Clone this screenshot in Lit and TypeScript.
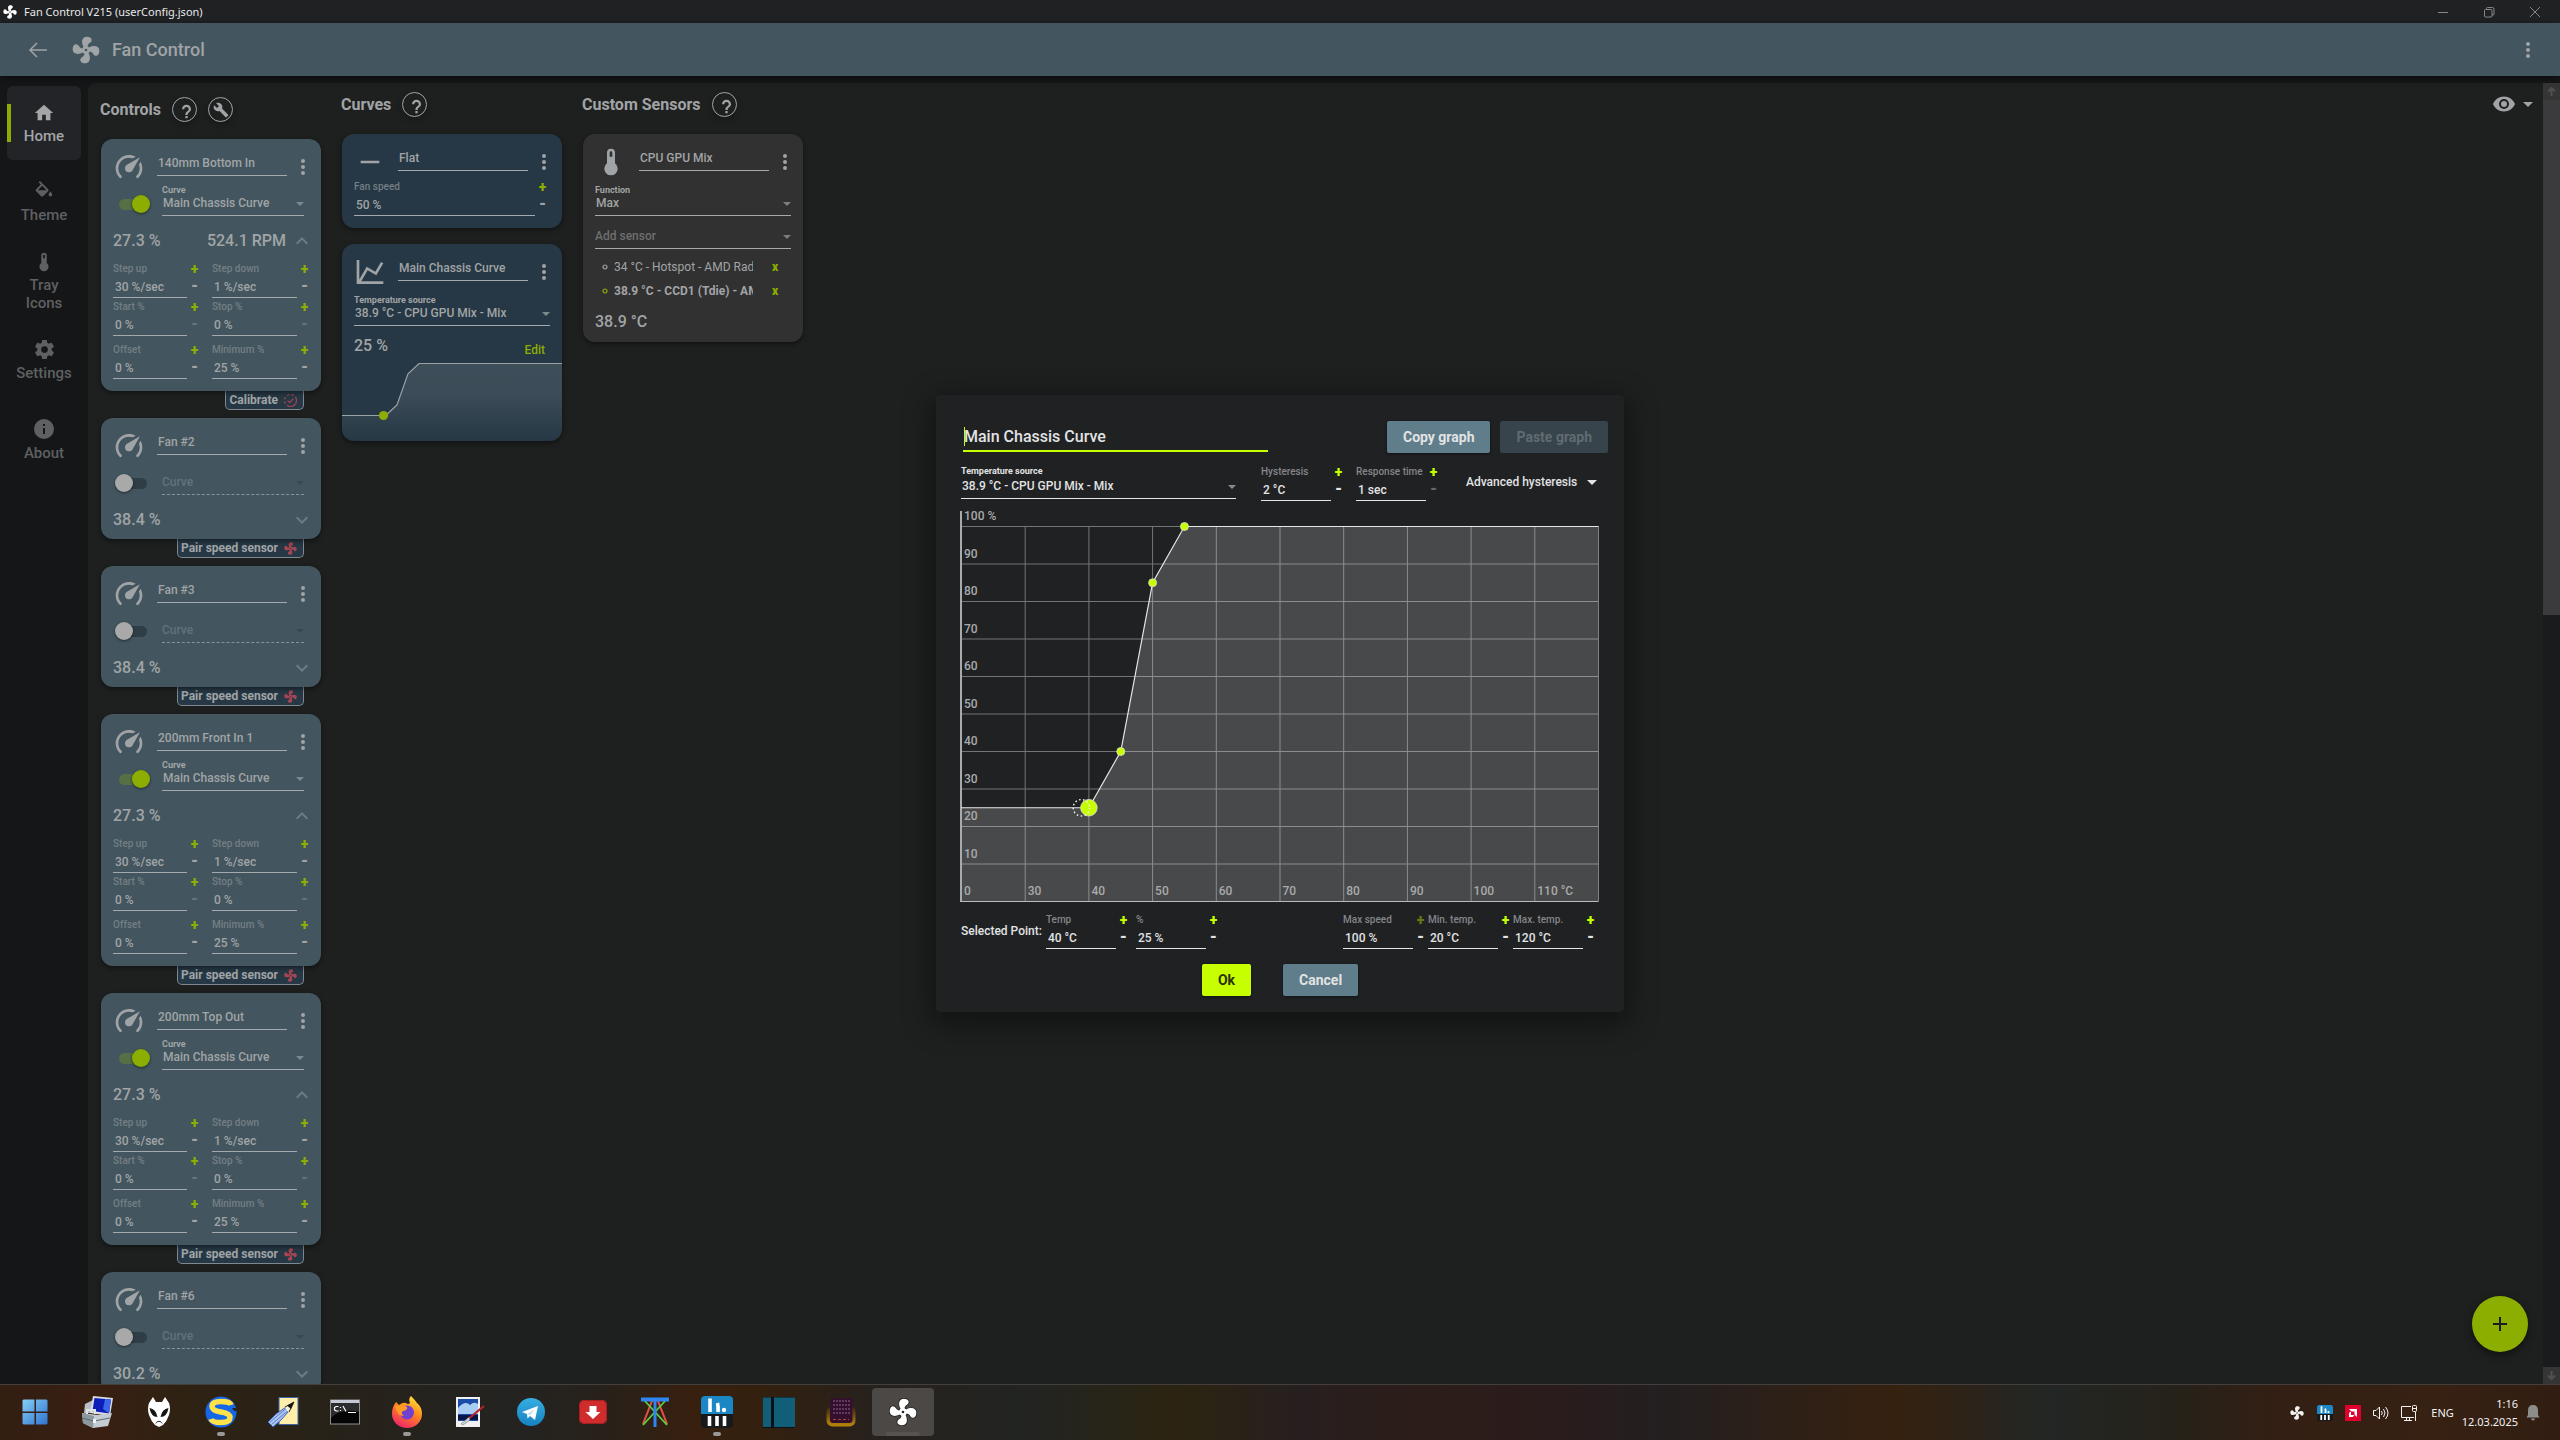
import { LitElement, html, css, svg, nothing } from "lit";
import { customElement } from "lit/decorators.js";
import { classMap } from "lit/directives/class-map.js";

const ICONS = {
  fan: "M12,11A1,1 0 0,0 11,12A1,1 0 0,0 12,13A1,1 0 0,0 13,12A1,1 0 0,0 12,11M12.5,2C17,2 17.11,5.57 14.75,6.75C13.76,7.24 13.32,8.29 13.13,9.22C13.61,9.42 14.03,9.73 14.35,10.13C18.05,8.13 22.03,8.92 22.03,12.5C22.03,17 18.46,17.1 17.28,14.73C16.78,13.74 15.72,13.3 14.79,13.11C14.59,13.59 14.28,14 13.88,14.34C15.87,18.03 15.08,22 11.5,22C7,22 6.91,18.42 9.27,17.24C10.25,16.75 10.69,15.71 10.89,14.79C10.4,14.59 9.97,14.27 9.65,13.87C5.96,15.85 2,15.07 2,11.5C2,7 5.56,6.89 6.74,9.26C7.24,10.25 8.29,10.68 9.22,10.87C9.41,10.39 9.73,9.97 10.14,9.65C8.15,5.96 8.94,2 12.5,2Z",
  home: "M10,20V14H14V20H19V12H22L12,3L2,12H5V20H10Z",
  fill: "M19,11.5C19,11.5 17,13.67 17,15A2,2 0 0,0 19,17A2,2 0 0,0 21,15C21,13.67 19,11.5 19,11.5M5.21,10L10,5.21L14.79,10M16.56,8.94L7.62,0L6.21,1.41L8.59,3.79L3.44,8.94C2.85,9.5 2.85,10.47 3.44,11.06L8.94,16.56C9.23,16.85 9.62,17 10,17C10.38,17 10.77,16.85 11.06,16.56L16.56,11.06C17.15,10.47 17.15,9.5 16.56,8.94Z",
  thermo: "M15 13V5A3 3 0 0 0 9 5V13A5 5 0 1 0 15 13M12 4A1 1 0 0 1 13 5V8H11V5A1 1 0 0 1 12 4Z",
  cog: "M12,15.5A3.5,3.5 0 0,1 8.5,12A3.5,3.5 0 0,1 12,8.5A3.5,3.5 0 0,1 15.5,12A3.5,3.5 0 0,1 12,15.5M19.43,12.97C19.47,12.65 19.5,12.33 19.5,12C19.5,11.67 19.47,11.34 19.43,11L21.54,9.37C21.73,9.22 21.78,8.95 21.66,8.73L19.66,5.27C19.54,5.05 19.27,4.96 19.05,5.05L16.56,6.05C16.04,5.66 15.5,5.32 14.87,5.07L14.5,2.42C14.46,2.18 14.25,2 14,2H10C9.75,2 9.54,2.18 9.5,2.42L9.13,5.07C8.5,5.32 7.96,5.66 7.44,6.05L4.95,5.05C4.73,4.96 4.46,5.05 4.34,5.27L2.34,8.73C2.21,8.95 2.27,9.22 2.46,9.37L4.57,11C4.53,11.34 4.5,11.67 4.5,12C4.5,12.33 4.53,12.65 4.57,12.97L2.46,14.63C2.27,14.78 2.21,15.05 2.34,15.27L4.34,18.73C4.46,18.95 4.73,19.03 4.95,18.95L7.44,17.94C7.96,18.34 8.5,18.68 9.13,18.93L9.5,21.58C9.54,21.82 9.75,22 10,22H14C14.25,22 14.46,21.82 14.5,21.58L14.87,18.93C15.5,18.67 16.04,18.34 16.56,17.94L19.05,18.95C19.27,19.03 19.54,18.95 19.66,18.73L21.66,15.27C21.78,15.05 21.73,14.78 21.54,14.63L19.43,12.97Z",
  info: "M13,9H11V7H13M13,17H11V11H13M12,2A10,10 0 0,0 2,12A10,10 0 0,0 12,22A10,10 0 0,0 22,12A10,10 0 0,0 12,2Z",
  eye: "M12,9A3,3 0 0,0 9,12A3,3 0 0,0 12,15A3,3 0 0,0 15,12A3,3 0 0,0 12,9M12,17A5,5 0 0,1 7,12A5,5 0 0,1 12,7A5,5 0 0,1 17,12A5,5 0 0,1 12,17M12,4.5C7,4.5 2.73,7.61 1,12C2.73,16.39 7,19.5 12,19.5C17,19.5 21.27,16.39 23,12C21.27,7.61 17,4.5 12,4.5Z",
  wrench: "M22.7,19L13.6,9.9C14.5,7.6 14,4.9 12.1,3C10.1,1 7.1,0.6 4.7,1.7L9,6L6,9L1.6,4.7C0.4,7.1 0.9,10.1 2.9,12.1C4.8,14 7.5,14.5 9.8,13.6L18.9,22.7C19.3,23.1 19.9,23.1 20.3,22.7L22.6,20.4C23.1,20 23.1,19.3 22.7,19Z",
  help: "M11,18H13V16H11V18M12,6A4,4 0 0,0 8,10H10A2,2 0 0,1 12,8A2,2 0 0,1 14,10C14,12 11,11.75 11,15H13C13,12.75 16,12.5 16,10A4,4 0 0,0 12,6Z",
  gauge: "M12,16A3,3 0 0,1 9,13C9,11.88 9.61,10.9 10.5,10.39L20.21,4.77L14.68,14.35C14.18,15.33 13.17,16 12,16M12,3C13.81,3 15.5,3.5 16.97,4.32L14.87,5.53C14,5.19 13,5 12,5A8,8 0 0,0 4,13C4,15.21 4.89,17.21 6.34,18.65H6.35C6.74,19.04 6.74,19.67 6.35,20.06C5.96,20.45 5.32,20.45 4.93,20.07V20.07C3.12,18.26 2,15.76 2,13A10,10 0 0,1 12,3M22,13C22,15.76 20.88,18.26 19.07,20.07V20.07C18.68,20.45 18.05,20.45 17.66,20.06C17.27,19.67 17.27,19.04 17.66,18.65V18.65C19.11,17.2 20,15.21 20,13C20,12 19.81,11 19.46,10.1L20.67,8C21.5,9.5 22,11.18 22,13Z",
  line: "M16,11.78L20.24,4.45L21.97,5.45L16.74,14.5L10.23,10.75L5.46,19H22V21H2V3H4V17.54L9.5,8L16,11.78Z",
  minus: "M19,13H5V11H19V13Z",
  down: "M7.41,8.58L12,13.17L16.59,8.58L18,10L12,16L6,10L7.41,8.58Z",
  up: "M7.41,15.41L12,10.83L16.59,15.41L18,14L12,8L6,14L7.41,15.41Z",
  dots: "M12,16A2,2 0 0,1 14,18A2,2 0 0,1 12,20A2,2 0 0,1 10,18A2,2 0 0,1 12,16M12,10A2,2 0 0,1 14,12A2,2 0 0,1 12,14A2,2 0 0,1 10,12A2,2 0 0,1 12,10M12,4A2,2 0 0,1 14,6A2,2 0 0,1 12,8A2,2 0 0,1 10,6A2,2 0 0,1 12,4Z",
  caret: "M7,10L12,15L17,10H7Z",
};

const icon = (name: keyof typeof ICONS, size: number, cls = "") =>
  html`<svg class=${"icon " + cls} width=${size} height=${size} viewBox="0 0 24 24" aria-hidden="true"><path d=${ICONS[name]} /></svg>`;

const base = css`
  * { box-sizing: border-box; }
  button, input, select { font: inherit; color: inherit; background: none; border: 0; padding: 0; margin: 0; border-radius: 0; outline: none; }
  button { cursor: pointer; }
  svg { display: block; flex: none; }
  .icon { fill: currentColor; }
`;

type Num = { label: string; value: string; minusOff?: boolean; plusOff?: boolean };
type Fan = { name: string; pct: string; curve?: string; rpm?: string; tab: "calibrate" | "pair" };

const fans: Fan[] = [
  { name: "140mm Bottom In", pct: "27.3 %", curve: "Main Chassis Curve", rpm: "524.1 RPM", tab: "calibrate" },
  { name: "Fan #2", pct: "38.4 %", tab: "pair" },
  { name: "Fan #3", pct: "38.4 %", tab: "pair" },
  { name: "200mm Front In 1", pct: "27.3 %", curve: "Main Chassis Curve", tab: "pair" },
  { name: "200mm Top Out", pct: "27.3 %", curve: "Main Chassis Curve", tab: "pair" },
  { name: "Fan #6", pct: "30.2 %", tab: "pair" },
];

const fanSettings: Num[] = [
  { label: "Step up", value: "30 %/sec" },
  { label: "Step down", value: "1 %/sec" },
  { label: "Start %", value: "0 %", minusOff: true },
  { label: "Stop %", value: "0 %", minusOff: true },
  { label: "Offset", value: "0 %" },
  { label: "Minimum %", value: "25 %" },
];

const curve: [number, number][] = [[40, 25], [45, 40], [50, 85], [55, 100]];

let uid = 0;

@customElement("app-root")
export class AppRoot extends LitElement {
  static styles = [base, css`
    :host {
      display: grid; grid-template-rows: minmax(0, 1fr) auto; height: 100vh; overflow: hidden;
      font-family: Roboto, sans-serif; font-weight: 500; font-size: 12px; line-height: 15px;
      --ink: #a1a4a6; --dim: #747e84; --lime: #8bae00; --rule: #a3a9ac; --caret: #7e898f;
      background: #151618; color: var(--ink);
    }
    .window { display: grid; grid-template-rows: 23px minmax(0, 1fr); min-height: 0; }
    .titlebar { display: flex; align-items: center; padding: 0 19px 0 2px; gap: 6px; background: #202123; color: #e8e8e8; font: 400 11px/16px "Noto Sans", sans-serif; }
    .titlebar .fanicon { color: #fff; }
    .winbtns { margin-left: auto; display: flex; gap: 34px; color: #85878a; }
    .winbtns svg { fill: none; stroke: currentColor; }
    .app { position: relative; display: grid; grid-template-rows: 53px minmax(0, 1fr); min-height: 0; }
    .header { display: flex; align-items: center; padding: 0 20px 0 26px; background: #43565f; z-index: 1; box-shadow: 0 2px 6px rgba(0,0,0,.5); color: #a1a4a6; }
    .back svg { fill: none; stroke: currentColor; stroke-width: 2; }
    .header .logo { margin-left: 20px; }
    .header h1 { margin: 0 auto 0 10px; font-size: 18px; line-height: 24px; font-weight: 500; }
    .body { display: grid; grid-template-columns: 88px minmax(0, 1fr) 17px; min-height: 0; }
    .nav { display: flex; flex-direction: column; gap: 5px; padding: 10px 7px; color: #5f6062; font-size: 15px; line-height: 18px; }
    .nav button { display: flex; flex-direction: column; align-items: center; justify-content: center; gap: 3px; min-height: 74px; border-radius: 6px; padding: 0 10px; }
    .nav .on { background: linear-gradient(var(--lime), var(--lime)) 0 18px / 4px 38px no-repeat, #232427; color: #a4a6a7; }
    .panel { display: flex; align-items: flex-start; gap: 21px; min-width: 0; min-height: 0; overflow: hidden; margin-top: 7px; padding-left: 13px; background: #1e201f; border-top-left-radius: 8px; }
    .column { width: 220px; flex: none; padding-top: 9px; }
    .column.controls { padding-top: 14px; }
    .colhead { display: flex; align-items: center; gap: 11px; margin: 0 0 17px -1px; }
    .colhead h2 { margin: 0; font-size: 16px; line-height: 25px; font-weight: 700; white-space: nowrap; }
    .round { width: 25px; height: 25px; border: 1px solid currentColor; border-radius: 50%; display: grid; place-items: center; box-shadow: 0 3px 6px rgba(0,0,0,.25); }
    .view { margin: 9px 3px 0 auto; display: flex; align-items: center; }
    .scroll { margin-top: 7px; display: grid; grid-template-rows: 17px 515px minmax(0, 1fr) 17px; background: #1a1b1c; }
    .scroll .thumb { background: #3b3b3d; }
    .scroll button { background: #353536; display: grid; place-items: center; color: #505052; }
    .scroll svg { fill: none; stroke: currentColor; stroke-width: 2; }

    .card { border-radius: 12px; background: #43565f; box-shadow: 0 2px 5px rgba(0,0,0,.45); position: relative; overflow: hidden; padding-bottom: 9px; }
    .card.open { padding-bottom: 12px; }
    .card.blue { background: #263845; padding-bottom: 10px; }
    .card.grey { background: #313131; --dim: #6d6e6e; --caret: #7d7d7d; padding-bottom: 10px; }
    .card.graph { padding-bottom: 0; }
    .stack { display: flex; flex-direction: column; gap: 16px; }
    .cardhead { display: flex; padding: 11px 6px 0 12px; height: 43px; }
    .cardhead .icon { margin-top: 1px; }
    .cardhead .name { width: 130px; height: 26px; margin: 0 4px 0 12px; padding-left: 1px; border-bottom: 1px solid var(--rule); }
    .cardhead button { height: 33px; }
    .switchrow { display: flex; gap: 12px; margin: 3px 17px 0 14px; }
    .toggle { appearance: none; flex: none; width: 35px; height: 18px; margin-top: 10px; display: grid; align-items: center; grid-template-columns: 100%; }
    .toggle::before { content: ""; grid-area: 1 / 1; height: 11px; margin: 0 3px 0 4px; border-radius: 6px; background: #2f3e46; }
    .toggle::after { content: ""; grid-area: 1 / 1; width: 18px; height: 18px; border-radius: 50%; background: #a9a9a9; box-shadow: 0 1px 3px rgba(0,0,0,.5); }
    .toggle:checked::before { background: #566f45; }
    .toggle:checked::after { background: var(--lime); justify-self: end; }
    .pick { display: flex; flex-direction: column; flex: 1; min-width: 0; }
    .pick label { font-size: 9px; line-height: 11px; height: 11px; font-weight: 700; }
    .pickbox { display: grid; align-items: center; }
    .pickbox select { grid-area: 1 / 1; appearance: none; width: 100%; height: 20px; padding: 0 16px 5px 1px; border-bottom: 1px solid var(--rule); line-height: 14px; }
    .pickbox svg { grid-area: 1 / 1; justify-self: end; margin: 0 0 5px 0; pointer-events: none; color: var(--caret); }
    .off select { border-bottom-style: dashed; color: #62727a; padding-left: 0; opacity: 1; border-bottom-color: #87949a; }
    .off svg { color: #394850; }
    .dimmed select { color: var(--dim); padding-left: 0; }
    .reading { display: flex; align-items: center; justify-content: space-between; height: 20px; margin: 15px 7px 0 12px; font-size: 16px; line-height: 20px; }
    .reading .rpm { margin-left: auto; margin-right: 4px; }
    .reading button { color: #6d7b82; }
    .settings { display: grid; grid-template-columns: 89fr 100fr; column-gap: 10px; row-gap: 2px; margin: 11px 9px 0 12px; }
    .settings .num:nth-child(n + 5) { margin-top: 5px; }
    .num { display: grid; grid-template-columns: minmax(0, 1fr) 15px; grid-template-rows: 14px 22px; }
    .num label { font-size: 10px; line-height: 14px; color: var(--dim); white-space: nowrap; }
    .num input { width: 100%; height: 22px; padding: 1px 0 0 2px; border-bottom: 1px solid var(--rule); }
    .num button { font-weight: 900; font-size: 14px; line-height: 14px; text-align: center; color: var(--lime); }
    .num .less { color: var(--ink); font-size: 16px; line-height: 20px; height: 20px; }
    .num .less:disabled { color: var(--dim); opacity: .7; }
    .num .more:disabled { opacity: .4; }
    .tabrow { display: flex; justify-content: flex-end; height: 19px; margin: 0 17px 8px 0; }
    .tab { display: flex; align-items: center; gap: 5px; padding: 1px 5px 0 3px; border: 1px solid #7f888e; border-top: 0; border-radius: 0 0 5px 5px; background: #263845; font-weight: 700; line-height: 17px; }
    .tab svg { color: #a34552; }
    .inset { margin: 8px 12px 0 12px; }
    .inset.second { margin-top: 13px; }
    .flat { margin: 3px 12px 2px 12px; }
    .graph .reading { margin-top: 10px; }
    .reading button.edit { color: var(--lime); align-self: flex-start; font-size: 12px; line-height: 28px; margin-right: 10px; }
    .mini { display: block; width: 100%; height: 84px; margin-top: 1px; }
    .sensors { list-style: none; margin: 6px 12px 8px 19px; padding: 0; }
    .sensors li { display: flex; align-items: center; height: 24px; font-weight: 500; }
    .sensors .dot { fill: none; stroke: var(--ink); }
    .sensors .txt { width: 139px; margin: 0 19px 0 6px; overflow: hidden; white-space: nowrap; font-weight: 400; }
    .sensors .hot .txt { font-weight: 700; }
    .sensors .hot .dot { stroke: var(--lime); }
    .sensors button { color: var(--lime); font-weight: 900; }
    .grey .reading { margin-top: 9px; }
    .fab { position: absolute; right: 32px; bottom: 32px; width: 56px; height: 56px; border-radius: 50%; background: var(--lime); color: #1c1e1d; display: grid; place-items: center; box-shadow: 0 3px 8px rgba(0,0,0,.5); }

    .overlay { position: absolute; inset: 0; z-index: 2; display: grid; place-items: center; }
    .dialog { width: 688px; max-width: 96vw; padding: 26px 25px 16px; border-radius: 4px; background: #202123; box-shadow: 0 8px 28px 6px rgba(0,0,0,.4); color: #e2e3e3; --ink: #e2e3e3; --dim: #85868a; --lime: #c6ff00; --rule: #e6e6e6; --caret: #8b8b8d; }
    .top { display: flex; gap: 10px; margin: 0 -9px 12px 2px; height: 32px; }
    .title { position: relative; width: 305px; height: 31px; margin-right: auto; }
    .title input { width: 100%; height: 31px; padding: 2px 0 0 1px; border-bottom: 2px solid var(--lime); font-size: 16px; }
    .title .cursor { position: absolute; left: 1px; top: 6px; width: 1px; height: 19px; background: var(--lime); }
    .btn { height: 32px; padding: 0 16px; border-radius: 2px; background: #607d8b; font-weight: 700; font-size: 14px; box-shadow: 0 1px 3px rgba(0,0,0,.5); white-space: nowrap; }
    .btn:disabled { background: #37444b; color: #616b70; box-shadow: none; }
    .btn.primary { background: var(--lime); color: #2b3100; }
    .opts { display: flex; align-items: flex-start; }
    .opts .pick { flex: 0 1 275px; gap: 2px; margin-right: 25px; }
    .opts .pick label { line-height: 12px; height: 12px; }
    .w { width: 85px; flex: none; }
    .opts .w { margin-right: 10px; }
    .adv { display: flex; align-items: center; gap: 10px; height: 34px; margin-left: 15px; white-space: nowrap; }
    .chart { display: block; width: calc(100% + 2px); margin: 10px 0 11px -1px; overflow: visible; }
    .chart text { fill: #a9aaab; font: 500 12px Roboto, sans-serif; }
    .bottom { display: flex; margin-right: 1px; }
    .bottom .sel { align-self: center; margin-right: 4px; line-height: 20px; white-space: nowrap; }
    .bottom .w + .w { margin-left: 5px; }
    .bottom .limits { display: flex; margin-left: auto; }
    .bottom .limits .w { margin-left: 0; }
    .actions { display: flex; justify-content: center; gap: 32px; margin-top: 15px; }
  `];

  private num(n: Num, cls = "") {
    const id = `n${uid++}`;
    return html`<div class=${"num " + cls}>
      <label for=${id}>${n.label}</label>
      <button class="more" aria-label=${"Increase " + n.label} ?disabled=${!!n.plusOff}>+</button>
      <input id=${id} type="text" .value=${n.value} />
      <button class="less" aria-label=${"Decrease " + n.label} ?disabled=${!!n.minusOff}>-</button>
    </div>`;
  }

  private pick(label: string, value: string, cls = "", showLabel = true) {
    const id = `s${uid++}`;
    const off = cls.includes("off");
    return html`<div class=${"pick " + cls}>
      ${showLabel || off ? html`<label for=${id}>${off ? nothing : label}</label>` : nothing}
      <div class="pickbox">
        <select id=${id} aria-label=${label} ?disabled=${off}><option>${value}</option></select>
        <svg class="icon" width="8" height="4" viewBox="0 0 8 4"><path d="M0 0H8L4 4Z" /></svg>
      </div>
    </div>`;
  }

  private head(ic: keyof typeof ICONS, name: string) {
    return html`<div class="cardhead">
      ${icon(ic, 32)}
      <input class="name" type="text" aria-label="Name" .value=${name} />
      <button aria-label="More">${icon("dots", 24)}</button>
    </div>`;
  }

  private fan(f: Fan) {
    const open = !!f.curve;
    return html`
      <article class=${classMap({ card: true, open })}>
        ${this.head("gauge", f.name)}
        <div class="switchrow">
          <input class="toggle" type="checkbox" aria-label=${"Enable " + f.name} .checked=${open} />
          ${open ? this.pick("Curve", f.curve!) : this.pick("Curve", "Curve", "off")}
        </div>
        <div class="reading">
          <span>${f.pct}</span>
          ${f.rpm ? html`<span class="rpm">${f.rpm}</span>` : nothing}
          <button aria-label="Expand">${icon(open ? "up" : "down", 24)}</button>
        </div>
        ${open ? html`<div class="settings">${fanSettings.map((s) => this.num(s))}</div>` : nothing}
      </article>
      <div class="tabrow">
        ${f.tab === "calibrate"
          ? html`<button class="tab">Calibrate
              <svg width="15" height="15" viewBox="0 0 15 15" fill="none" stroke="currentColor" stroke-width="1.2"><circle cx="7.5" cy="7.5" r="6" stroke-dasharray="13 2 2.5 2 2.5 2 2.5 2 2.5 2" /><path d="M4.6 7.6L6.7 9.6L10.4 5.6" /></svg></button>`
          : html`<button class="tab">Pair speed sensor ${icon("fan", 15)}</button>`}
      </div>`;
  }

  private miniGraph() {
    const pts = curve.map(([t, p]) => `${((t - 20) * 2.2).toFixed(1)},${(75.5 - p * 0.69).toFixed(1)}`).join(" ");
    return html`<svg class="mini" viewBox="0 0 220 84" preserveAspectRatio="none">
      <defs><linearGradient id="g" x1="0" y1="0" x2="0" y2="1"><stop offset="0" stop-color="#fff" stop-opacity=".11" /><stop offset=".4" stop-color="#fff" stop-opacity=".1" /><stop offset="1" stop-color="#fff" stop-opacity="0" /></linearGradient></defs>
      <polygon fill="url(#g)" points="0,58.5 ${pts} 220,6.5 220,84 0,84" />
      <polyline fill="none" stroke="#9aa3a8" stroke-width="1.2" points="0,58.5 ${pts} 220,6.5" />
      <circle cx="41.5" cy="58.5" r="4.6" fill="#8bae00" />
    </svg>`;
  }

  private chart() {
    const X = (t: number) => 1.5 + (t - 20) * 6.37;
    const Y = (p: number) => 390.5 - p * 3.75;
    const pts = curve.map(([t, p]) => `${X(t)},${Y(p)}`).join(" ");
    const idx = Array.from({ length: 10 }, (_, i) => i);
    return html`<svg class="chart" viewBox="0 0 640 391" role="img" aria-label="Fan curve">
      ${idx.map((i) => svg`
        <line x1="1" x2="638.5" y1=${Y(100 - i * 10)} y2=${Y(100 - i * 10)} stroke="#747576" />
        <line y1="15" y2="390" x1=${X(30 + i * 10)} x2=${X(30 + i * 10)} stroke="#747576" />`)}
      <polygon fill="#fff" fill-opacity=".18" points="1,${Y(25)} ${pts} ${X(120)},${Y(100)} ${X(120)},${Y(0)} 1,${Y(0)}" />
      <path d="M1 0V390.500" stroke="#a9aaab" stroke-width="2" />
      <path d="M0 390.5H638.5" stroke="#b9baba" />
      ${idx.map((i) => svg`
        <text x="4" y=${9 + i * 37.5}>${i === 0 ? "100 %" : 100 - i * 10}</text>
        <text x=${4 + i * 63.7} y="384">${i === 0 ? "0" : i === 9 ? "110 °C" : 20 + i * 10}</text>`)}
      <polyline fill="none" stroke="#e6e6e6" stroke-width="1.2" points="1,${Y(25)} ${pts} ${X(120)},${Y(100)}" />
      ${curve.map(([t, p], i) => svg`<circle cx=${X(t)} cy=${Y(p)} r=${i ? 4 : 8.3} fill="#c6ff00" stroke="#dcdcdc" stroke-width=".8" />`)}
      <circle cx=${X(40) - 7.5} cy=${Y(25)} r="8.2" fill="none" stroke="#f0f0f0" stroke-width="1.4" stroke-dasharray="1.6 2.4" />
    </svg>`;
  }

  private help(label: string) {
    return html`<button class="round" aria-label=${label}>${icon("help", 27)}</button>`;
  }

  private dot() {
    return html`<svg class="dot" width="6" height="6" viewBox="0 0 6 6"><circle cx="3" cy="3" r="2" stroke-width="1.2" /></svg>`;
  }

  render() {
    return html`
      <div class="window">
        <div class="titlebar">
          ${icon("fan", 16, "fanicon")}<span>Fan Control V215 (userConfig.json)</span>
          <div class="winbtns">
            <button aria-label="Minimize"><svg width="12" height="12" viewBox="0 0 12 12"><path d="M1 6.500H11" /></svg></button>
            <button aria-label="Restore"><svg width="12" height="12" viewBox="0 0 12 12"><rect x="1.500" y="3.500" width="7.500" height="7.500" rx="1" /><path d="M3.500 3.500V2.500Q3.500 1.500 4.500 1.500H9.500Q11 1.500 11 3V8Q11 9 10 9H9" /></svg></button>
            <button aria-label="Close"><svg width="12" height="12" viewBox="0 0 12 12"><path d="M1 1L11 11M11 1L1 11" /></svg></button>
          </div>
        </div>
        <div class="app">
          <header class="header">
            <button class="back" aria-label="Back"><svg width="24" height="24" viewBox="0 0 24 24"><path d="M21 12H4M11 5L4 12L11 19" stroke-width="1.500" /></svg></button>
            <span class="logo">${icon("fan", 32)}</span>
            <h1>Fan Control</h1>
            <button aria-label="Menu">${icon("dots", 24)}</button>
          </header>
          <div class="body">
            <nav class="nav">
              <button class="on">${icon("home", 22)}Home</button>
              <button>${icon("fill", 22)}Theme</button>
              <button>${icon("thermo", 22)}Tray Icons</button>
              <button>${icon("cog", 23)}Settings</button>
              <button>${icon("info", 24)}About</button>
            </nav>
            <main class="panel">
              <section class="column controls">
                <div class="colhead"><h2>Controls</h2>${this.help("Help on controls")}<button class="round" aria-label="Tools">${icon("wrench", 16)}</button></div>
                ${fans.map((f) => this.fan(f))}
              </section>
              <section class="column">
                <div class="colhead"><h2>Curves</h2>${this.help("Help on curves")}</div>
                <div class="stack">
                  <article class="card blue">
                    ${this.head("minus", "Flat")}
                    <div class="flat">${this.num({ label: "Fan speed", value: "50 %" })}</div>
                  </article>
                  <article class="card blue graph">
                    ${this.head("line", "Main Chassis Curve")}
                    <div class="inset">${this.pick("Temperature source", "38.9 °C - CPU GPU Mix - Mix")}</div>
                    <div class="reading"><span>25 %</span><button class="edit">Edit</button></div>
                    ${this.miniGraph()}
                  </article>
                </div>
              </section>
              <section class="column">
                <div class="colhead"><h2>Custom Sensors</h2>${this.help("Help on sensors")}</div>
                <article class="card grey">
                  ${this.head("thermo", "CPU GPU Mix")}
                  <div class="inset">${this.pick("Function", "Max")}</div>
                  <div class="inset second">${this.pick("Add sensor", "Add sensor", "dimmed", false)}</div>
                  <ul class="sensors">
                    <li>${this.dot()}<span class="txt">34 °C - Hotspot - AMD Rad</span><button aria-label="Remove">x</button></li>
                    <li class="hot">${this.dot()}<span class="txt">38.9 °C - CCD1 (Tdie) - AM</span><button aria-label="Remove">x</button></li>
                  </ul>
                  <div class="reading"><span>38.9 °C</span></div>
                </article>
              </section>
              <button class="view" aria-label="View">${icon("eye", 24)}${icon("caret", 24)}</button>
            </main>
            <div class="scroll">
              <button aria-label="Scroll up"><svg width="9" height="9" viewBox="0 0 9 9"><path d="M4.500 9V1M1 4.500L4.500 1L8 4.500" /></svg></button>
              <div class="thumb"></div><div></div>
              <button aria-label="Scroll down"><svg width="9" height="9" viewBox="0 0 9 9"><path d="M4.500 0V8M1 4.500L4.500 8L8 4.500" /></svg></button>
            </div>
          </div>
          <button class="fab" aria-label="Add"><svg width="14" height="14" viewBox="0 0 14 14"><path d="M7 0V14M0 7H14" stroke="currentColor" stroke-width="2" /></svg></button>
          <div class="overlay">
            <div class="dialog" role="dialog" aria-label="Edit curve">
              <div class="top">
                <div class="title"><input type="text" aria-label="Curve name" .value=${"Main Chassis Curve"} /><span class="cursor"></span></div>
                <button class="btn">Copy graph</button>
                <button class="btn" disabled>Paste graph</button>
              </div>
              <div class="opts">
                ${this.pick("Temperature source", "38.9 °C - CPU GPU Mix - Mix")}
                ${this.num({ label: "Hysteresis", value: "2 °C" }, "w")}
                ${this.num({ label: "Response time", value: "1 sec", minusOff: true }, "w")}
                <button class="adv">Advanced hysteresis <svg class="icon" width="10" height="5" viewBox="0 0 10 5"><path d="M0 0H10L5 5Z" /></svg></button>
              </div>
              ${this.chart()}
              <div class="bottom">
                <span class="sel">Selected Point:</span>
                ${this.num({ label: "Temp", value: "40 °C" }, "w")}
                ${this.num({ label: "%", value: "25 %" }, "w")}
                <div class="limits">
                  ${this.num({ label: "Max speed", value: "100 %", plusOff: true }, "w")}
                  ${this.num({ label: "Min. temp.", value: "20 °C" }, "w")}
                  ${this.num({ label: "Max. temp.", value: "120 °C" }, "w")}
                </div>
              </div>
              <div class="actions"><button class="btn primary">Ok</button><button class="btn">Cancel</button></div>
            </div>
          </div>
        </div>
      </div>
      <task-bar></task-bar>`;
  }
}

const apps: { name: string; run?: boolean; active?: boolean; art: unknown }[] = [
  { name: "Start", art: svg`<defs><linearGradient id="w" x1="0" y1="0" x2="1" y2="1"><stop offset="0" stop-color="#86cdf7"/><stop offset="1" stop-color="#2d74d0"/></linearGradient></defs>
    <path fill="url(#w)" d="M4.500 3.500H15.500V15.500H3.500V4.500ZM17 3.500H27.500L28.500 4.500V15.500H17ZM3.500 17H15.500V28.500H4.500L3.500 27.500ZM17 17H28.500V27.500L27.500 28.500H17Z"/>` },
  { name: "Computer tools", art: svg`<path fill="#b9bfc4" d="M4 8L12 4V17H3Z"/><path fill="#d9dde0" d="M12 0L32 2L29 20L9 17Z"/><path fill="#0b1fb8" d="M13.500 2L30 3.500L28 17.500L11.500 15Z"/><path fill="#3b66e8" d="M24 3L30 3.500L28 17.500L22 13Z"/><path fill="#c3ccd1" d="M1 17L17 19L31 17L27 30L12 32L2 27Z"/><path fill="#8b989e" d="M1 17L13 20L12 32L2 27Z"/><path d="M1 22L13 25L29 22" stroke="#5f6b71" fill="none"/><path d="M6 18V14H14V18" stroke="#dde3e6" stroke-width="2" fill="none"/><rect x="12" y="23" width="3" height="4" fill="#eef2f4"/>` },
  { name: "Foobar", art: svg`<path fill="#fff" d="M10 1L13 6H19L22 1L26 7Q28 13 26 19Q24 25 20 29L16 31L12 29Q8 25 6 19Q4 13 6 7Z"/><path fill="#151515" d="M6.500 12Q13 13 14.500 21Q8 21 6.500 12M25.500 12Q19 13 17.500 21Q24 21 25.500 12M12 28Q16 21.500 20 28L18.500 27Q16 24.500 13.500 27Z"/>` },
  { name: "Editor S", run: true, art: svg`<circle cx="16" cy="16" r="15.500" fill="#1666e8"/><path d="M26 9Q25 5.500 16 5.500Q7 5.500 7 10.500Q7 14.500 16 16Q25 17.500 25 21.500Q25 26.500 16 26.500Q7 26.500 6 23" stroke="#ffe14a" stroke-width="5.500" fill="none"/><path fill="#2b241e" d="M27 12H32V15H29Z"/>` },
  { name: "Notes", art: svg`<rect x="12" y="1.500" width="19" height="27" fill="#ffeeab" stroke="#3c63a5"/><path d="M19 11L9 18L1 26L6 31L14 24L21 16Z" fill="#a9c4f0" stroke="#3c5fb0"/><path d="M3 26L19 12.500M4.500 28.500L20.500 15" stroke="#5b82cf"/><path d="M18 11L27 6L22 16L20 15Z" fill="#f7f0dd"/><path d="M27 6L20 9.500L24 13Z" fill="#111"/><path d="M18 11L27 6L22 16" fill="none" stroke="#222"/>` },
  { name: "Command Prompt", art: svg`<rect x="1.500" y="4" width="29" height="24" fill="#050505" stroke="#8d9097"/><rect x="2" y="4" width="28" height="3" fill="#c4c9d4"/><path fill="#2c2c2e" d="M2 7H30V16Q12 12 2 22Z"/><path d="M9.500 10.500H7L5.500 11.500V14L7 15H9.500M11.500 11V12M11.500 14V15M14 10L17 15.500M19 16.500H27" stroke="#fff" stroke-width="1.200" fill="none"/>` },
  { name: "Firefox", run: true, art: svg`<defs><linearGradient id="f" x1=".8" y1="0" x2=".3" y2="1"><stop offset="0" stop-color="#ffe83c"/><stop offset=".45" stop-color="#ff8a1c"/><stop offset="1" stop-color="#f0226c"/></linearGradient></defs>
    <path fill="url(#f)" d="M19 7Q17 3 20 0Q24 4 26 7Q31 11 31 18A15 14 0 0 1 1 18Q1 11 5 6L8 9Q12 6 15 7Q17 9 19 7Z"/><circle cx="16" cy="16.500" r="7" fill="#7240d0"/><path fill="#ff9a26" d="M4 10Q12 8 16 11Q17 14 12 15Q9 17 13 20Q6 20 4 10Z"/>` },
  { name: "Paint viewer", art: svg`<rect x="3" y="1" width="24" height="30" fill="#f1f1f1"/><rect x="5" y="3" width="20" height="22" fill="#1b4aa8"/><path fill="#a9cdf2" d="M5 12Q12 4 17 9Q21 5 25 8V18H5Z"/><path fill="#061646" d="M5 19H25V24H5Z"/><path d="M31 10L14 24" stroke="#b81f27" stroke-width="2.200"/><path fill="#c9d2d8" stroke="#666" stroke-width=".5" d="M16 21L17 24L10 29L8 28Z"/>` },
  { name: "Telegram", art: svg`<defs><linearGradient id="t" x1="0" y1="0" x2="0" y2="1"><stop offset="0" stop-color="#35aee2"/><stop offset="1" stop-color="#1782bf"/></linearGradient></defs><circle cx="16" cy="16" r="14" fill="url(#t)"/><path fill="#fff" d="M7 16L23 10L20 24L15 20L12.500 22.500L12 18Z"/><path d="M12.300 18L20 13L15 19.500Z" fill="#bfe0f2"/>` },
  { name: "Downloader", art: svg`<rect x="2" y="4" width="28" height="24" rx="5" fill="#d02c2e"/><rect x="2.500" y="4.500" width="27" height="23" rx="5" fill="none" stroke="#a51f22"/><path fill="#fff" d="M12.500 10H19.500V16H23.500L16 23L8.500 16H12.500Z"/>` },
  { name: "Wires", art: svg`<path d="M13 5L4 28M19 5L28 28" stroke="#e8504a" stroke-width="2"/><path d="M5 4L28 29M27 4L4 29" stroke="#5bd33c" stroke-width="1.800"/><path d="M16 3V31" stroke="#2f86f3" stroke-width="3"/><path d="M2 3.500H30" stroke="#2f86f3" stroke-width="4"/>` },
  { name: "HWiNFO", run: true, art: "hw" },
  { name: "Panels", art: svg`<rect x="0" y="1" width="32" height="31" fill="#0a1216"/><rect x="0" y="1.500" width="8" height="29.500" fill="#125d78"/><rect x="11" y="1.500" width="21" height="29.500" fill="#125d78"/>` },
  { name: "Calculator", art: svg`<defs><linearGradient id="c" x1="0" y1="0" x2="0" y2="1"><stop offset="0" stop-color="#7a5208" stop-opacity=".2"/><stop offset=".8" stop-color="#a8780a"/><stop offset="1" stop-color="#b5830c"/></linearGradient></defs><rect x="1.500" y="10" width="29" height="20.500" rx="6" fill="url(#c)"/><rect x="5" y="2" width="22.500" height="25" rx="3" fill="#350f2e"/><path d="M8 5H25M8 9H25M8 13H25M8 17H25" stroke="#6d4a6c" stroke-width="1.600" stroke-dasharray="2 1"/><path d="M8 23.500H24" stroke="#a0502c" stroke-dasharray="3 2"/>` },
  { name: "Fan Control", active: true, art: svg`<path transform="scale(1.333)" fill="#fff" stroke="#151515" stroke-width="1" paint-order="stroke" d=${ICONS.fan}/>` },
];

const hwArt = svg`<rect width="32" height="32" rx="4" fill="#17191b"/><path fill="#1b87c4" d="M0 18V4Q0 0 4 0H28Q32 0 32 4V18Z"/><path stroke="#fff" stroke-width="3.600" fill="none" d="M9 2.500V16M16.500 7Q17.500 11 17 16"/><circle cx="23" cy="14" r="2.200" fill="#fff"/><path stroke="#fff" stroke-width="3.600" d="M8.500 20V30M16 20V30M23.500 20V30"/>`;

@customElement("task-bar")
export class TaskBar extends LitElement {
  static styles = [base, css`
    :host { display: block; font: 400 11px/18px "Noto Sans", sans-serif; color: #f2f2f2; }
    .bar { display: flex; height: 56px; padding: 0 20px 0 4px; border-top: 1px solid #433f3c;
      background: linear-gradient(90deg, #331e12 0, #381f12 4%, #2f2213 7%, #282218 12%, #232321 20%, #292119 24%, #38200f 27%, #33200f 30%, #27211d 34%, #222422 40%, #2c2411 46%, #271f1f 51%, #2d1d18 56%, #2a1c1d 61%, #231f20 65%, #2c2019 69%, #36210f 74%, #222624 80%, #26221a 85%, #331f13 89%, #362113 95%, #321d12 100%); }
    .app { width: 62px; display: grid; place-items: center; grid-template-rows: 3px 1fr 3px; margin: 3px 0 4px; border-radius: 4px; padding-bottom: 1px; }
    .app svg { grid-row: 2; }
    .app i { grid-row: 3; width: 8px; height: 4px; border-radius: 2px; background: #9a9896; }
    .app.active { background: #4b4846; }
    .app.active i { width: 34px; background: #565351; }
    .tray { margin-left: auto; display: flex; align-items: center; gap: 12px; }
    .tray .lang { margin-left: 2px; }
    .clock { text-align: right; line-height: 18px; margin-left: -4px; }
    .line { fill: none; stroke: #f2f2f2; }
    .bell { margin-left: -4px; color: #8f8d8c; }
  `];

  render() {
    return html`<footer class="bar">
      ${apps.map((a) => html`<button class=${classMap({ app: true, active: !!a.active })} aria-label=${a.name}>
        <svg width="32" height="32" viewBox="0 0 32 32">${a.art === "hw" ? hwArt : a.art}</svg>
        ${a.run || a.active ? html`<i></i>` : nothing}</button>`)}
      <div class="tray">
        ${icon("fan", 16)}
        <svg width="16" height="16" viewBox="0 0 32 32">${hwArt}</svg>
        <svg width="16" height="16" viewBox="0 0 16 16"><rect width="16" height="16" fill="#e0002f"/><path fill="#fff" d="M4 4H12V12L9.500 9.500V6.500H6.500ZM4 8L6 6.500V10H9.500L8 12H4Z"/></svg>
        <svg class="line" width="16" height="16" viewBox="0 0 16 16"><path d="M.5 5.500H3L6.500 2V14L3 10.500H.5ZM8.500 6Q10 8 8.500 10M10.500 4Q13.500 8 10.500 12M12.500 2Q17.500 8 12.500 14"/></svg>
        <svg class="line" width="16" height="16" viewBox="0 0 16 16"><path d="M10 1.500H.5V12.500H13M3 15.500H11M5.500 12.500V15M8.500 12.500V15M14.500 7V16"/><rect x="11.500" y=".5" width="4" height="6" rx="1"/><path d="M11.500 3.500H15.500"/></svg>
        <span class="lang">ENG</span>
        <time class="clock">1:16<br />12.03.2025</time>
        <svg class="bell icon" width="14" height="16" viewBox="0 0 14 16"><path d="M7 0Q12 0 12 5.500V10L13.500 12.500H.5L2 10V5.500Q2 0 7 0ZM5 13.500H9Q9 15.500 7 15.500Q5 15.500 5 13.500Z"/></svg>
      </div>
    </footer>`;
  }
}
